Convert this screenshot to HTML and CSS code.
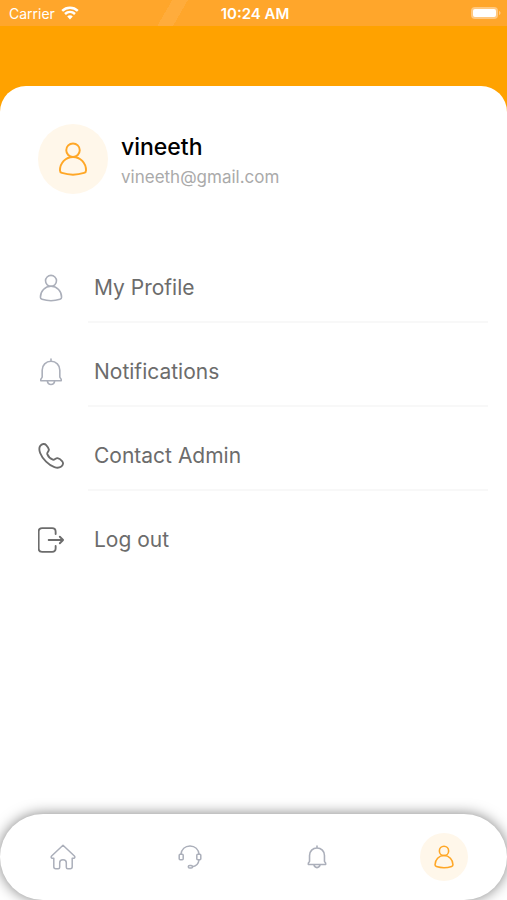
FILE: index.html
```html
<!DOCTYPE html>
<html lang="en">
<head>
    <meta charset="UTF-8">
    <meta name="viewport" content="width=device-width, initial-scale=1.0">
    <title>Profile</title>
    <link rel="stylesheet" href="styles.css">
</head>
<body>
    <!-- Shared icon shapes -->
    <svg class="sprite" aria-hidden="true">
        <symbol id="icon-user" viewBox="0 0 28 30">
            <circle cx="14" cy="7.300" r="5.900"/>
            <path d="M14 13.200C7.500 13.200 2.600 18.500 2.600 25c0 1.200.5 1.800 1.700 2.200 6 1.900 13.400 1.900 19.400 0 1.200-.4 1.700-1 1.700-2.200 0-6.500-4.900-11.800-11.400-11.800z"/>
        </symbol>
        <symbol id="icon-bell" viewBox="0 0 28 30">
            <path d="M14 1v2.500M4.500 20.500V13c0-5.200 4-9.500 9.500-9.500s9.500 4.300 9.500 9.500v7.500c0 1 1.500 1.500 1.500 2.500v1.500H3V23c0-1 1.500-1.500 1.500-2.500zM10 24.500c.4 2.600 1.900 4 4 4s3.600-1.400 4-4"/>
        </symbol>
    </svg>

    <div class="app">
        <header class="header">
            <div class="status-bar">
                <div class="carrier">
                    <span>Carrier</span>
                    <svg class="wifi" viewBox="0 0 18 14">
                        <path d="M1.200 4.900c4.500-4.100 11.100-4.100 15.600 0M4 8c2.900-2.700 7.100-2.700 10 0"/>
                        <path class="wifi-dot" d="M6.200 10.400c1.600-1.500 4-1.500 5.600 0L9 13.400z"/>
                    </svg>
                </div>
                <span class="time">10:24 AM</span>
                <div class="battery">
                    <svg viewBox="0 0 30 14">
                        <rect class="battery-case" x="0" y="1" width="27" height="12" rx="4"/>
                        <rect class="battery-level" x="2" y="3" width="23" height="8" rx="2"/>
                        <path class="battery-case" d="M28 5c2 .6 2 3.400 0 4z"/>
                    </svg>
                </div>
            </div>
        </header>

        <main class="card">
            <section class="profile">
                <div class="avatar">
                    <svg class="icon icon-lg"><use href="#icon-user"/></svg>
                </div>
                <div class="profile-text">
                    <h1>vineeth</h1>
                    <p>vineeth@gmail.com</p>
                </div>
            </section>

            <ul class="menu">
                <li>
                    <a href="#profile">
                        <svg class="icon icon-pale"><use href="#icon-user"/></svg>
                        <span>My Profile</span>
                    </a>
                </li>
                <li>
                    <a href="#notifications">
                        <svg class="icon icon-pale"><use href="#icon-bell"/></svg>
                        <span>Notifications</span>
                    </a>
                </li>
                <li>
                    <a href="#contact">
                        <svg class="icon" viewBox="0 0 28 28">
                            <path d="M2.300 3.300C4.200.6 7.200.4 8.800 2.200c1.300 1.400 2.600 3.400 2.900 4.800.4 1.900-2.300 3.200-1.700 5 .9 2.300 3.700 5.100 6 6 1.800.6 3.100-2.100 5-1.700 1.500.3 3.600 1.700 4.900 3.100 1.700 1.800 1.400 4.500-1.200 6.200-3.600 2.300-9.800.6-16-5.500C2.500 13.900 0 6.900 2.300 3.300z"/>
                        </svg>
                        <span>Contact Admin</span>
                    </a>
                </li>
                <li>
                    <a href="#logout">
                        <svg class="icon" viewBox="0 0 28 28">
                            <path d="M19 7.500V5c0-2.500-1.300-3.800-3.800-3.800H4.500C2 1.200.7 2.500.7 5v18c0 2.500 1.300 3.800 3.800 3.800h10.700c2.500 0 3.800-1.300 3.800-3.800v-2.500M11.500 14H27M23.500 10.500 27 14l-3.500 3.500"/>
                        </svg>
                        <span>Log out</span>
                    </a>
                </li>
            </ul>
        </main>

        <nav class="tab-bar">
            <a href="#home" aria-label="Home">
                <svg class="icon icon-tab" viewBox="0 0 26 26">
                    <path d="M13 1.300 1.600 12c-.8.9-.5 2.200.7 2.200h1.500v8.600c0 1.400.7 2 2 2h2.400c1 0 1.500-.5 1.500-1.500v-4.500c0-4 6.600-4 6.600 0v4.500c0 1 .5 1.500 1.500 1.500h2.400c1.300 0 2-.6 2-2v-8.600h1.500c1.200 0 1.500-1.300.7-2.200z"/>
                </svg>
            </a>
            <a href="#support" aria-label="Support">
                <svg class="icon icon-tab" viewBox="0 0 26 26">
                    <path d="M4 10.200C4.500 5.300 8 1.900 13 1.900s8.500 3.400 9 8.300M22 15.800c-.4 4-2.500 6.200-6.500 7"/>
                    <rect x="2.200" y="10.200" width="4" height="5.600" rx="1"/>
                    <rect x="19.800" y="10.200" width="4" height="5.600" rx="1"/>
                    <rect x="11.300" y="21.500" width="4.200" height="2.600" rx="1.300"/>
                </svg>
            </a>
            <a href="#alerts" aria-label="Notifications">
                <svg class="icon icon-tab-sm"><use href="#icon-bell"/></svg>
            </a>
            <a href="#account" aria-label="Account" class="active">
                <svg class="icon icon-tab-sm"><use href="#icon-user"/></svg>
            </a>
        </nav>
    </div>
</body>
</html>
```

FILE: styles.css
```css
* {
    box-sizing: border-box;
}
body {
    margin: 0;
    font-family: Inter, "Open Sans", sans-serif;
    color: #6c6c6c;
    background: #fff;
}
.sprite {
    position: absolute;
    width: 0;
    height: 0;
}
.app {
    min-height: 100vh;
    display: flex;
    flex-direction: column;
    overflow: hidden;
}

/* Header */
.header {
    height: 112px;
    background: #ffa200;
}
.status-bar {
    display: grid;
    grid-template-columns: 1fr auto 1fr;
    align-items: center;
    height: 26px;
    padding: 0 6px 0 9px;
    color: #fff;
    font-size: 14px;
    background: linear-gradient(120deg, #ffa62b 33%, #ffac3c 33%, #ffac3c 36%, #ffa62b 36%);
}
.carrier {
    display: flex;
    align-items: center;
    gap: 6px;
}
.wifi {
    width: 18px;
    height: 14px;
    fill: none;
    stroke: #fff;
    stroke-width: 2.5;
}
.wifi-dot {
    fill: #fff;
    stroke: none;
}
.time {
    font-size: 15px;
    font-weight: 600;
}
.battery {
    display: flex;
    justify-content: flex-end;
}
.battery svg {
    width: 30px;
    height: 14px;
}
.battery-case {
    fill: #ffc880;
}
.battery-level {
    fill: #fff;
}

/* Card, overlaps the header so its corners show orange */
.card {
    flex: 1;
    margin-top: -26px;
    padding: 38px 19px 0 38px;
    background: #fff;
    border-radius: 26px 26px 0 0;
}
.profile {
    display: flex;
    align-items: center;
    gap: 13px;
    margin-bottom: 45px;
}
.avatar {
    display: flex;
    align-items: center;
    justify-content: center;
    width: 70px;
    height: 70px;
    border-radius: 50%;
    color: #ffa726;
    background: #fff7ea;
}
.profile-text {
    padding-top: 4px;
}
.profile-text h1 {
    margin: 0;
    font-size: 23px;
    line-height: 32px;
    font-weight: 500;
    color: #000;
}
.profile-text p {
    margin: 0;
    font-size: 17px;
    line-height: 28px;
    color: #aaa;
}

/* Menu */
.menu {
    margin: 0;
    padding: 0;
    list-style: none;
}
.menu a {
    display: flex;
    align-items: center;
    color: #6c6c6c;
    text-decoration: none;
}
.menu span {
    flex: 1;
    margin-left: 24px;
    padding: 34px 0 18px 6px;
    font-size: 21px;
    line-height: 30px;
    border-bottom: 2px solid #f8f8f8;
}
.menu li:last-child span {
    border-bottom-color: transparent;
}
.menu .icon {
    margin-top: 14px;
}
.icon {
    width: 26px;
    height: 28px;
    fill: none;
    stroke: currentColor;
    stroke-width: 2;
    stroke-linecap: round;
    stroke-linejoin: round;
}
.icon-lg {
    width: 32px;
    height: 36px;
    stroke-width: 1.7;
}
.menu .icon-pale {
    color: #abafba;
    stroke-width: 1.7;
}

/* Bottom tabs */
.tab-bar {
    display: grid;
    grid-template-columns: repeat(4, 1fr);
    justify-items: center;
    align-items: center;
    height: 86px;
    background: #fff;
    border-radius: 43px;
    box-shadow: 0 0 14px rgba(0, 0, 0, 0.5);
}
.tab-bar a {
    display: flex;
    align-items: center;
    justify-content: center;
    width: 48px;
    height: 48px;
    border-radius: 50%;
    color: #abafba;
}
.tab-bar a.active {
    color: #ffa726;
    background: #fff7ea;
}
.icon-tab {
    width: 26px;
    height: 26px;
    stroke-width: 1.5;
}
.icon-tab-sm {
    width: 22px;
    height: 24px;
}
```
